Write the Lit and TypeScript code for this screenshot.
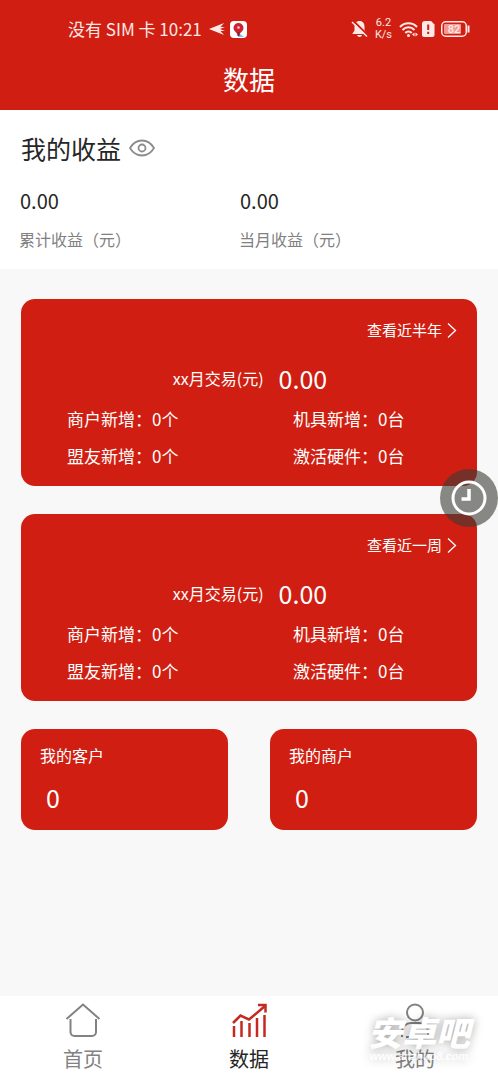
import { LitElement, html, css, svg } from "lit";
import { customElement, property } from "lit/decorators.js";

interface Stat {
  label: string;
  value: string;
}

@customElement("status-bar")
export class StatusBar extends LitElement {
  static styles = css`
    :host {
      display: flex;
      justify-content: space-between;
      align-items: center;
      height: 58px;
      padding: 0 28px 0 68px;
      color: #ffe9e6;
    }
    .side {
      display: flex;
      align-items: center;
    }
    .clock {
      font-size: 17px;
      line-height: 24px;
      margin-right: 7px;
      white-space: pre;
    }
    .app {
      margin-left: 4px;
    }
    .speed {
      font-family: Roboto, sans-serif;
      font-size: 11px;
      line-height: 12px;
      text-align: center;
      margin: 0 7px;
    }
    .wifi {
      margin-right: 2px;
    }
    .battery {
      margin-left: 6px;
    }
    svg {
      display: block;
    }
  `;

  render() {
    return html`
      <div class="side">
        <span class="clock">没有 SIM 卡 10:21</span>
        <svg width="17" height="14" viewBox="0 0 17 14" fill="currentColor" aria-hidden="true">
          <path d="M0 7 L15 1 L11.500 5 L16 5 L11 7 L16 9 L11.500 9 L15 13 Z" />
        </svg>
        <svg class="app" width="17" height="17" viewBox="0 0 17 17" aria-hidden="true">
          <rect width="17" height="17" rx="4" fill="#fff" />
          <path d="M9 12 L14 16 H8 Z" fill="#8bbcf0" />
          <path d="M8.500 2 a5 5 0 0 1 5 5 c0 3 -3 4 -4.400 7 h-1.200 c-1.400 -3 -4.400 -4 -4.400 -7 a5 5 0 0 1 5 -5z" fill="#cf2230" />
          <circle cx="8.500" cy="6.500" r="1.300" fill="#f7c9c9" />
          <rect x="7.500" y="11" width="2" height="4" fill="#7a2430" />
        </svg>
      </div>
      <div class="side">
        <svg width="17" height="18" viewBox="0 0 17 18" aria-hidden="true">
          <path d="M8.500 1 c3.500 0 5 2.600 5 5.500 v4 l2 3 v.5 h-14 v-.5 l2 -3 v-4 c0 -3 1.500 -5.500 5 -5.500z M6 15 h5 c-.5 2.500 -4.500 2.500 -5 0z" fill="currentColor" />
          <path d="M2 .5 L17 15.500" stroke="#d01f12" stroke-width="2" />
          <path d="M1 2 L16 16.500" stroke="currentColor" stroke-width="1.500" />
        </svg>
        <div class="speed">
          <div>6.2</div>
          <div>K/s</div>
        </div>
        <svg class="wifi" width="20" height="17" viewBox="0 0 20 17" fill="none" stroke="currentColor" stroke-width="2" aria-hidden="true">
          <path d="M1 6 C5.500 1 13.500 1 18 6" />
          <path d="M3.500 9 C7 5.300 12 5.300 15.500 9" />
          <path d="M6.300 12 C8.200 10 10.800 10 12.700 12" />
          <circle cx="9.500" cy="14.500" r="1.500" fill="currentColor" stroke="none" />
          <path d="M15.500 11.500 L13 13.500 L15.500 15.500z M16.500 11.500 L19 13.500 L16.500 15.500z" fill="currentColor" stroke="none" />
        </svg>
        <svg width="14" height="16" viewBox="0 0 14 16" aria-hidden="true">
          <path d="M4 0 H10 L13.500 3.500 V14 a2 2 0 0 1 -2 2 H3 a2 2 0 0 1 -2 -2 V3 a3 3 0 0 1 3 -3z" fill="currentColor" />
          <path d="M7.200 3.500 V9 M7.200 10.800 V13" stroke="#c5221a" stroke-width="2" />
        </svg>
        <svg class="battery" width="29" height="16" viewBox="0 0 29 16" aria-hidden="true">
          <rect x=".75" y=".75" width="24.500" height="14.500" rx="4" fill="none" stroke="currentColor" stroke-width="1.500" />
          <rect x="3" y="3" width="17" height="10" rx="1" fill="#f09a94" />
          <path d="M27.500 4.500 V11.500" stroke="currentColor" stroke-width="2" />
          <text x="13" y="12" text-anchor="middle" font-family="Roboto, sans-serif" font-size="11" font-weight="500" fill="currentColor">82</text>
        </svg>
      </div>
    `;
  }
}

@customElement("trade-card")
export class TradeCard extends LitElement {
  @property() link = "";
  @property({ attribute: false }) stats: Stat[] = [];

  static styles = css`
    :host {
      display: block;
      padding: 16px 20px 12px 46px;
      border-radius: 14px;
      background: #d01f12;
      color: #fff;
    }
    .more {
      display: flex;
      align-items: center;
      gap: 5px;
      width: max-content;
      margin-left: auto;
      color: inherit;
      text-decoration: none;
      font-size: 15px;
      line-height: 30px;
    }
    .total {
      display: flex;
      justify-content: center;
      align-items: center;
      gap: 15px;
      padding: 15px 24px 0 0;
      font-size: 16px;
      line-height: 36px;
    }
    .amount {
      font-size: 25px;
    }
    .stats {
      display: grid;
      grid-template-columns: 1fr 1fr;
      column-gap: 62px;
      padding-top: 4px;
      font-size: 17px;
      line-height: 37px;
    }
  `;

  render() {
    return html`
      <a class="more" href="#">
        ${this.link}
        <svg width="10" height="17" viewBox="0 0 10 17" fill="none" stroke="currentColor" stroke-width="1.300" aria-hidden="true">
          <path d="M1 1.500 L8.500 8.500 L1 15.500" />
        </svg>
      </a>
      <div class="total">
        <span>xx月交易(元)</span>
        <span class="amount">0.00</span>
      </div>
      <div class="stats">
        ${this.stats.map((s) => html`<span>${s.label}：${s.value}</span>`)}
      </div>
    `;
  }
}

@customElement("count-card")
export class CountCard extends LitElement {
  @property() label = "";
  @property() value = "0";

  static styles = css`
    :host {
      display: block;
      padding: 14px 19px;
      border-radius: 14px;
      background: #d01f12;
      color: #fff;
    }
    .label {
      font-size: 16px;
      line-height: 24px;
    }
    .value {
      padding: 12px 0 0 6px;
      font-size: 25px;
      line-height: 37px;
    }
  `;

  render() {
    return html`
      <div class="label">${this.label}</div>
      <div class="value">${this.value}</div>
    `;
  }
}

const homeIcon = svg`
  <path d="M1.500 16 L18 1.500 L34.500 16" />
  <path d="M5.500 16 V29 a4 4 0 0 0 4 4 H27 a4 4 0 0 0 4 -4 V16" />
`;
const chartIcon = svg`
  <path d="M2 20 L9.500 12.500 L18 16.500 L34 3" stroke-width="2.500" />
  <path d="M27 2 H34.500 V9.500" stroke-width="2.500" />
  <path d="M3 23 V34 M10.500 18 V34 M18.500 20 V34 M26 15 V34 M33.500 12 V34" stroke-width="2.500" />
`;
const userIcon = svg`
  <circle cx="18" cy="9.500" r="8" />
  <path d="M5 34 V29 a9 9 0 0 1 9 -9 H22 a9 9 0 0 1 9 9 V34 H9" />
`;

const tabs = [
  { label: "首页", icon: homeIcon, active: false },
  { label: "数据", icon: chartIcon, active: true },
  { label: "我的", icon: userIcon, active: false },
];

@customElement("tab-bar")
export class TabBar extends LitElement {
  static styles = css`
    :host {
      display: block;
      position: relative;
      background: #fff;
    }
    nav {
      display: grid;
      grid-template-columns: repeat(3, 1fr);
    }
    .tab {
      display: flex;
      flex-direction: column;
      align-items: center;
      gap: 5px;
      padding: 7px 0 6px;
      color: #828282;
      text-decoration: none;
      font-size: 20px;
      line-height: 30px;
    }
    .active {
      color: #262626;
    }
    .active svg {
      color: #c52a20;
    }
    svg {
      display: block;
    }
    .mark {
      position: absolute;
      right: 28px;
      top: 19px;
      color: #fff;
      text-align: center;
      font-style: italic;
      pointer-events: none;
      text-shadow: 0 0 10px rgba(0, 0, 0, 0.35);
    }
    .brand {
      font-size: 34px;
      line-height: 34px;
      font-weight: 900;
    }
    .site {
      font: italic 700 11px/14px "Liberation Sans", sans-serif;
      opacity: 0.7;
    }
  `;

  render() {
    return html`
      <nav>
        ${tabs.map(
          (t) => html`
            <a class="tab ${t.active ? "active" : ""}" href="#">
              <svg width="36" height="36" viewBox="0 0 36 36" fill="none" stroke="currentColor" stroke-width="2" aria-hidden="true">
                ${t.icon}
              </svg>
              ${t.label}
            </a>
          `
        )}
      </nav>
      <div class="mark">
        <div class="brand">安卓吧</div>
        <div class="site">www.anzhuo8.com</div>
      </div>
    `;
  }
}

const tradeStats: Stat[] = [
  { label: "商户新增", value: "0个" },
  { label: "机具新增", value: "0台" },
  { label: "盟友新增", value: "0个" },
  { label: "激活硬件", value: "0台" },
];

@customElement("app-root")
export class AppRoot extends LitElement {
  static styles = css`
    :host {
      display: flex;
      flex-direction: column;
      position: relative;
      min-height: 100vh;
      background: #f8f8f8;
      color: #262626;
      font-family: "Noto Sans CJK SC", sans-serif;
    }
    header {
      background: #d01f12;
      color: #fff;
    }
    h1 {
      margin: 0;
      padding-bottom: 10px;
      font-size: 26px;
      line-height: 42px;
      font-weight: 400;
      text-align: center;
    }
    .income {
      padding: 20px 19px 16px;
      background: #fff;
    }
    .heading {
      display: flex;
      align-items: center;
      gap: 8px;
      padding-left: 2px;
    }
    h2 {
      margin: 0;
      font-size: 25px;
      line-height: 36px;
      font-weight: 400;
    }
    .eye {
      padding: 0;
      border: 0;
      background: none;
      color: #8c8c8c;
    }
    svg {
      display: block;
    }
    .figures {
      display: grid;
      grid-template-columns: 1fr 1fr;
      padding: 20px 20px 0 0;
    }
    .amount {
      padding-left: 1px;
      font-size: 20px;
      line-height: 30px;
    }
    .caption {
      padding-top: 9px;
      font-size: 16px;
      line-height: 28px;
      color: #808080;
    }
    main {
      flex: 1;
      display: flex;
      flex-direction: column;
      gap: 28px;
      padding: 30px 21px;
    }
    .pair {
      display: grid;
      grid-template-columns: 1fr 1fr;
      gap: 42px;
    }
    .history {
      position: absolute;
      right: 0;
      top: 469px;
      padding: 0;
      border: 0;
      border-radius: 50%;
      background: rgba(60, 60, 55, 0.6);
      color: #fff;
    }
  `;

  render() {
    return html`
      <header>
        <status-bar></status-bar>
        <h1>数据</h1>
      </header>
      <section class="income">
        <div class="heading">
          <h2>我的收益</h2>
          <button class="eye" aria-label="显示或隐藏收益">
            <svg width="26" height="18" viewBox="0 0 26 18" fill="none" stroke="currentColor" stroke-width="1.800">
              <path d="M1 9 C7 -1 19 -1 25 9 C19 19 7 19 1 9z" />
              <circle cx="13" cy="9" r="3.500" />
            </svg>
          </button>
        </div>
        <div class="figures">
          <div>
            <div class="amount">0.00</div>
            <div class="caption">累计收益（元）</div>
          </div>
          <div>
            <div class="amount">0.00</div>
            <div class="caption">当月收益（元）</div>
          </div>
        </div>
      </section>
      <main>
        <trade-card link="查看近半年" .stats=${tradeStats}></trade-card>
        <trade-card link="查看近一周" .stats=${tradeStats}></trade-card>
        <div class="pair">
          <count-card label="我的客户"></count-card>
          <count-card label="我的商户"></count-card>
        </div>
      </main>
      <tab-bar></tab-bar>
      <button class="history" aria-label="历史记录">
        <svg width="58" height="58" viewBox="0 0 58 58" fill="none" stroke="currentColor" stroke-width="3">
          <circle cx="29" cy="29" r="16" />
          <path d="M29 20 V30 H21.500" stroke-width="3.500" />
        </svg>
      </button>
    `;
  }
}
